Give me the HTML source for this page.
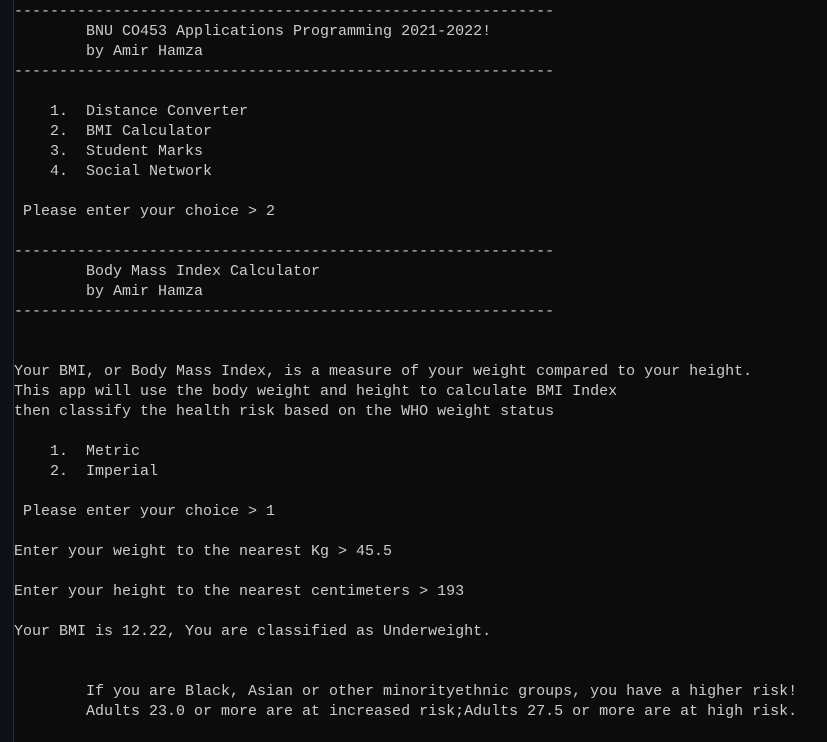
<!DOCTYPE html>
<html><head><meta charset="utf-8"><style>
html,body{margin:0;padding:0;}
body{width:827px;height:742px;background:#0c0c0c;overflow:hidden;position:relative;}
.strip{position:absolute;left:0;top:0;width:13px;height:742px;background:#0d1016;border-right:1px solid #2e3035;}
pre{position:absolute;left:14px;top:2px;margin:0;font-family:"Liberation Mono",monospace;font-size:15px;line-height:20px;color:#cccccc;white-space:pre;}
</style></head><body>
<div class="strip"></div>
<pre>------------------------------------------------------------
        BNU CO453 Applications Programming 2021-2022!
        by Amir Hamza
------------------------------------------------------------

    1.  Distance Converter
    2.  BMI Calculator
    3.  Student Marks
    4.  Social Network

 Please enter your choice &gt; 2

------------------------------------------------------------
        Body Mass Index Calculator
        by Amir Hamza
------------------------------------------------------------


Your BMI, or Body Mass Index, is a measure of your weight compared to your height.
This app will use the body weight and height to calculate BMI Index
then classify the health risk based on the WHO weight status

    1.  Metric
    2.  Imperial

 Please enter your choice &gt; 1

Enter your weight to the nearest Kg &gt; 45.5

Enter your height to the nearest centimeters &gt; 193

Your BMI is 12.22, You are classified as Underweight.


        If you are Black, Asian or other minorityethnic groups, you have a higher risk!
        Adults 23.0 or more are at increased risk;Adults 27.5 or more are at high risk.
</pre>
</body></html>
